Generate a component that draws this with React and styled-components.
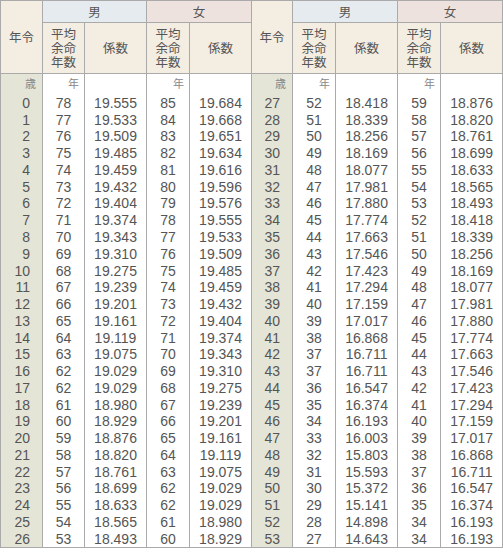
import React from "react";
import styled, { createGlobalStyle } from "styled-components";

const Global = createGlobalStyle`
  html, body { margin: 0; padding: 0; background: #fff; }
  body { font-family: "Noto Sans CJK JP", "Noto Sans", sans-serif; color: #555; }
`;

const Table = styled.table`
  border-collapse: collapse;
  table-layout: fixed;
  width: 502px;
  border: 1px solid #aaa;
  font-family: "Noto Sans CJK JP", "Noto Sans", sans-serif;
  color: #555;
`;

const Row = styled.tr`
  height: ${(p) => p.$h};
`;

const Head = styled.th`
  background: ${(p) => p.$bg};
  border: 1px solid #aaa;
  font-weight: normal;
  font-size: 12.5px;
  padding: 0;
  line-height: 14px;
  text-align: center;
  vertical-align: middle;
  color: #555;
`;

const AgeCell = styled.td`
  background: #e5e5d7;
  border-left: 1px solid #aaa;
  border-right: 1px solid #aaa;
  padding: ${(p) => (p.$unit ? "0 6px 2px 0" : "0 12px 0 0")};
  text-align: right;
  font-family: ${(p) =>
    p.$unit ? `"Noto Sans CJK JP", sans-serif` : `"Liberation Sans", Arial, sans-serif`};
  font-size: ${(p) => (p.$unit ? "11px" : "14px")};
  color: ${(p) => (p.$unit ? "#888" : "#555")};
  line-height: 14px;
  vertical-align: middle;
`;

const NumCell = styled.td`
  background: #fff;
  border-left: 1px solid #aaa;
  border-right: 1px solid #aaa;
  padding: 0;
  text-align: center;
  font-family: "Liberation Sans", Arial, sans-serif;
  font-size: 14px;
  line-height: 14px;
  vertical-align: middle;
`;

const UnitCell = styled.td`
  background: #fff;
  border-left: 1px solid #aaa;
  border-right: 1px solid #aaa;
  padding: 0 5px 2px 0;
  text-align: right;
  font-size: 11px;
  color: #888;
  line-height: 14px;
  vertical-align: middle;
`;

const left = [
  [0, 78, "19.555", 85, "19.684"],
  [1, 77, "19.533", 84, "19.668"],
  [2, 76, "19.509", 83, "19.651"],
  [3, 75, "19.485", 82, "19.634"],
  [4, 74, "19.459", 81, "19.616"],
  [5, 73, "19.432", 80, "19.596"],
  [6, 72, "19.404", 79, "19.576"],
  [7, 71, "19.374", 78, "19.555"],
  [8, 70, "19.343", 77, "19.533"],
  [9, 69, "19.310", 76, "19.509"],
  [10, 68, "19.275", 75, "19.485"],
  [11, 67, "19.239", 74, "19.459"],
  [12, 66, "19.201", 73, "19.432"],
  [13, 65, "19.161", 72, "19.404"],
  [14, 64, "19.119", 71, "19.374"],
  [15, 63, "19.075", 70, "19.343"],
  [16, 62, "19.029", 69, "19.310"],
  [17, 62, "19.029", 68, "19.275"],
  [18, 61, "18.980", 67, "19.239"],
  [19, 60, "18.929", 66, "19.201"],
  [20, 59, "18.876", 65, "19.161"],
  [21, 58, "18.820", 64, "19.119"],
  [22, 57, "18.761", 63, "19.075"],
  [23, 56, "18.699", 62, "19.029"],
  [24, 55, "18.633", 62, "19.029"],
  [25, 54, "18.565", 61, "18.980"],
  [26, 53, "18.493", 60, "18.929"],
];

const right = [
  [27, 52, "18.418", 59, "18.876"],
  [28, 51, "18.339", 58, "18.820"],
  [29, 50, "18.256", 57, "18.761"],
  [30, 49, "18.169", 56, "18.699"],
  [31, 48, "18.077", 55, "18.633"],
  [32, 47, "17.981", 54, "18.565"],
  [33, 46, "17.880", 53, "18.493"],
  [34, 45, "17.774", 52, "18.418"],
  [35, 44, "17.663", 51, "18.339"],
  [36, 43, "17.546", 50, "18.256"],
  [37, 42, "17.423", 49, "18.169"],
  [38, 41, "17.294", 48, "18.077"],
  [39, 40, "17.159", 47, "17.981"],
  [40, 39, "17.017", 46, "17.880"],
  [41, 38, "16.868", 45, "17.774"],
  [42, 37, "16.711", 44, "17.663"],
  [43, 37, "16.711", 43, "17.546"],
  [44, 36, "16.547", 42, "17.423"],
  [45, 35, "16.374", 41, "17.294"],
  [46, 34, "16.193", 40, "17.159"],
  [47, 33, "16.003", 39, "17.017"],
  [48, 32, "15.803", 38, "16.868"],
  [49, 31, "15.593", 37, "16.711"],
  [50, 30, "15.372", 36, "16.547"],
  [51, 29, "15.141", 35, "16.374"],
  [52, 28, "14.898", 34, "16.193"],
  [53, 27, "14.643", 34, "16.193"],
];

const widths = [42, 42, 62, 43, 62, 41, 43, 62, 43, 62];

const HALF = ["left", "right"];

const Avg = () => (
  <>
    平均
    <br />
    余命
    <br />
    年数
  </>
);

export default function App() {
  return (
    <>
      <Global />
      <Table>
        <colgroup>
          {widths.map((w, i) => (
            <col key={i} style={{ width: w }} />
          ))}
        </colgroup>
        <thead>
          <Row $h="22px">
            {HALF.map((h) => (
              <React.Fragment key={h}>
                <Head rowSpan={2} $bg="#f4ede2">年令</Head>
                <Head colSpan={2} $bg="#e5ebee">男</Head>
                <Head colSpan={2} $bg="#eee2df">女</Head>
              </React.Fragment>
            ))}
          </Row>
          <Row $h="51px">
            {HALF.map((h) => (
              <React.Fragment key={h}>
                <Head $bg="#f4ede2"><Avg /></Head>
                <Head $bg="#f4ede2">係数</Head>
                <Head $bg="#f4ede2"><Avg /></Head>
                <Head $bg="#f4ede2">係数</Head>
              </React.Fragment>
            ))}
          </Row>
        </thead>
        <tbody>
          <Row $h="21px">
            {HALF.map((h) => (
              <React.Fragment key={h}>
                <AgeCell $unit>歳</AgeCell>
                <UnitCell>年</UnitCell>
                <UnitCell />
                <UnitCell>年</UnitCell>
                <UnitCell />
              </React.Fragment>
            ))}
          </Row>
          {left.map((l, i) => {
            const r = right[i];
            return (
              <Row key={i} $h="16.78px">
                <AgeCell>{l[0]}</AgeCell>
                <NumCell>{l[1]}</NumCell>
                <NumCell>{l[2]}</NumCell>
                <NumCell>{l[3]}</NumCell>
                <NumCell>{l[4]}</NumCell>
                <AgeCell>{r[0]}</AgeCell>
                <NumCell>{r[1]}</NumCell>
                <NumCell>{r[2]}</NumCell>
                <NumCell>{r[3]}</NumCell>
                <NumCell>{r[4]}</NumCell>
              </Row>
            );
          })}
        </tbody>
      </Table>
    </>
  );
}
